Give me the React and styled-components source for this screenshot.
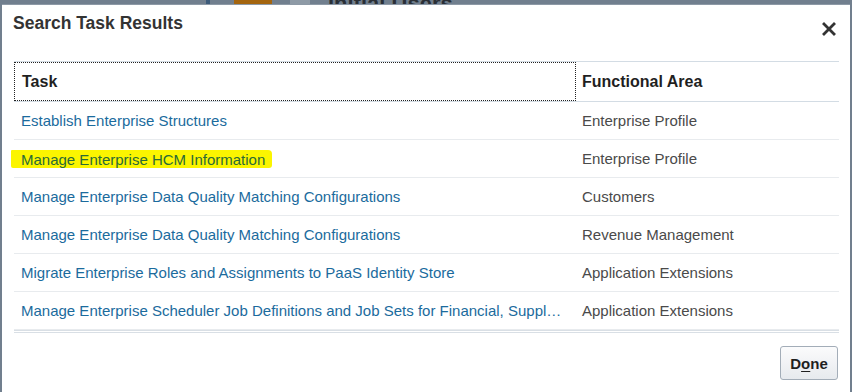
import React from 'react'
import styled, { createGlobalStyle } from 'styled-components'

const GlobalStyle = createGlobalStyle`
  html, body {
    margin: 0;
    padding: 0;
    height: 100%;
    background: #717f8e;
    font-family: "Liberation Sans", Arial, sans-serif;
  }
  #root {
    height: 392px;
    overflow: hidden;
  }
`;

const Page = styled.div`
  width: 852px;
  height: 392px;
  display: flex;
  flex-direction: column;
  overflow: hidden;
`;

const Backdrop = styled.div`
  height: 4px;
  flex: none;
  overflow: hidden;
  display: flex;
  align-items: flex-end;
  padding-left: 70px;
`;

const BackdropBit = styled.div`
  flex: none;
  width: ${p => p.w}px;
  height: 20px;
  margin-left: ${p => p.ml || 0}px;
  background: ${p => p.bg};
`;

const BackdropText = styled.div`
  flex: none;
  margin-left: 18px;
  font-size: 22px;
  font-weight: bold;
  line-height: 20px;
  color: #2a2f36;
  height: 20px;
  transform: translateY(10px);
`;

const Dialog = styled.div`
  flex: 1;
  margin: 0 2px 0 2px;
  background: #ffffff;
  border-top: 1px solid #8d99a6;
  display: flex;
  flex-direction: column;
  padding: 0 11px 0 12px;
`;

const TitleBar = styled.div`
  display: flex;
  align-items: flex-start;
  justify-content: space-between;
  height: 56px;
  padding-top: 7px;
  box-sizing: border-box;
`;

const Title = styled.h1`
  margin: 0 0 0 -1px;
  font-size: 17.5px;
  line-height: 22px;
  font-weight: bold;
  color: #333333;
`;

const CloseButton = styled.button`
  border: none;
  background: none;
  padding: 0;
  margin: 10px 3px 0 0;
  width: 14px;
  height: 14px;
  display: flex;
  cursor: pointer;
`;

const Table = styled.div`
  display: flex;
  flex-direction: column;
  border-top: 1px solid #d3dce4;
  border-bottom: 3px double #d9dfe5;
`;

const Row = styled.div`
  display: grid;
  grid-template-columns: 562px 1fr;
  height: ${p => (p.header ? 39 : 37)}px;
  border-bottom: 1px solid ${p => (p.header ? '#d3dce4' : '#e8ebee')};
`;

const HeadCell = styled.div`
  display: flex;
  align-items: center;
  padding-left: ${p => (p.first ? 8 : 6)}px;
  font-size: 16px;
  font-weight: bold;
  color: #1f1f1f;
  box-sizing: border-box;
  outline: ${p => (p.focused ? '1px dotted #222' : 'none')};
  outline-offset: -1px;
`;

const Cell = styled.div`
  display: flex;
  align-items: center;
  padding-left: ${p => (p.first ? 7 : 6)}px;
  padding-right: 10px;
  font-size: 15px;
  color: ${p => (p.link ? '#1b6b9d' : '#4a4a4a')};
  white-space: nowrap;
  min-width: 0;
`;

const Marker = styled.span`
  background: #fbf500;
  color: #2a6a37;
  margin-left: -10px;
  padding: 1px 7px 0 10px;
  border-radius: 1px 4px 3px 2px;
`;

const Footer = styled.div`
  display: flex;
  justify-content: flex-end;
  padding-top: 13px;
`;

const DoneButton = styled.button`
  width: 58px;
  height: 34px;
  border: 1px solid #a3adb8;
  border-radius: 3px;
  background: linear-gradient(#fbfbfc, #e7eaee);
  font-family: "Liberation Sans", Arial, sans-serif;
  font-size: 15px;
  font-weight: bold;
  color: #1f1f1f;
  padding: 0;
  margin-right: 1px;
  cursor: pointer;
  u {
    text-decoration-thickness: 1px;
    text-underline-offset: 2px;
  }
`;

const rows = [
  ['Establish Enterprise Structures', 'Enterprise Profile'],
  ['Manage Enterprise HCM Information', 'Enterprise Profile', true],
  ['Manage Enterprise Data Quality Matching Configurations', 'Customers'],
  ['Manage Enterprise Data Quality Matching Configurations', 'Revenue Management'],
  ['Migrate Enterprise Roles and Assignments to PaaS Identity Store', 'Application Extensions'],
  ['Manage Enterprise Scheduler Job Definitions and Job Sets for Financial, Suppl…', 'Application Extensions'],
]

export default function App() {
  return (
    <Page>
      <GlobalStyle />
      <Backdrop>
        <BackdropBit w={4} bg="#3d5b7a" ml={136} />
        <BackdropBit w={38} bg="#a4650f" ml={24} />
        <BackdropBit w={20} bg="#8e9aa6" ml={18} />
        <BackdropText>Initial Users</BackdropText>
      </Backdrop>
      <Dialog>
        <TitleBar>
          <Title>Search Task Results</Title>
          <CloseButton aria-label="Close">
            <svg width="14" height="14" viewBox="0 0 14 14">
              <path d="M2 2 L12 12 M12 2 L2 12" stroke="#333" strokeWidth="2.8" strokeLinecap="square" />
            </svg>
          </CloseButton>
        </TitleBar>
        <Table>
          <Row header>
            <HeadCell first focused>Task</HeadCell>
            <HeadCell>Functional Area</HeadCell>
          </Row>
          {rows.map(([task, area, marked], i) => (
            <Row key={i}>
              <Cell first link>
                {marked ? <Marker>{task}</Marker> : task}
              </Cell>
              <Cell>{area}</Cell>
            </Row>
          ))}
        </Table>
        <Footer>
          <DoneButton>D<u>o</u>ne</DoneButton>
        </Footer>
      </Dialog>
    </Page>
  )
}
